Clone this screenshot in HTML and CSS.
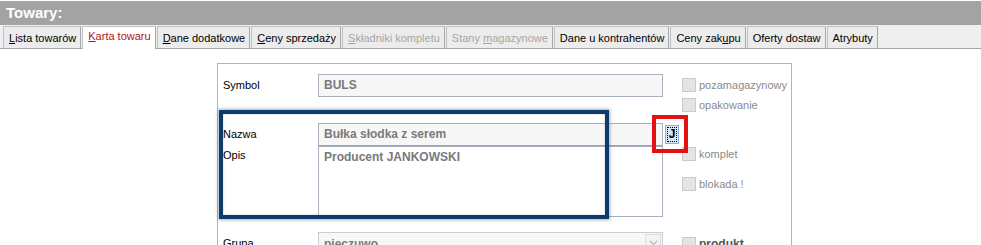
FILE: index.html
```html
<!DOCTYPE html>
<html lang="pl">
<head>
<meta charset="utf-8">
<title>Towary</title>
<link rel="stylesheet" href="styles.css">
</head>
<body>
<div class="title">Towary:</div>
<div class="tabbar">
  <div class="tab"><u>L</u>ista towarów</div>
  <div class="tab active"><u>K</u>arta towaru</div>
  <div class="tab"><u>D</u>ane dodatkowe</div>
  <div class="tab"><u>C</u>eny sprzedaży</div>
  <div class="tab disabled"><u>S</u>kładniki kompletu</div>
  <div class="tab disabled">Stany <u>m</u>agazynowe</div>
  <div class="tab">Dane u kontrahentów</div>
  <div class="tab">Ceny zak<u>u</u>pu</div>
  <div class="tab">Oferty dostaw</div>
  <div class="tab">Atrybuty</div>
</div>
<div class="content">
  <div class="panel">
    <div class="fields">
      <div class="row r-symbol">
        <span class="label">Symbol</span>
        <div class="input">BULS</div>
      </div>
      <div class="row r-nazwa">
        <span class="label">Nazwa</span>
        <div class="input">Bułka słodka z serem</div>
        <div class="jbtn"><span class="jfocus">J</span></div>
      </div>
      <div class="row r-opis">
        <span class="label">Opis</span>
        <div class="textarea">Producent JANKOWSKI</div>
      </div>
      <div class="row r-grupa">
        <span class="label">Grupa</span>
        <div class="select"><span class="sel-text">pieczuwo</span><span class="arrow">
          <svg width="9" height="6" viewBox="0 0 9 6"><path d="M1 1 L4.5 4.5 L8 1" fill="none" stroke="#b8b8b8" stroke-width="1.3"/></svg>
        </span></div>
      </div>
    </div>
    <div class="checks">
      <div class="check c1"><span class="box"></span>pozamagazynowy</div>
      <div class="check c2"><span class="box"></span>opakowanie</div>
      <div class="check c3"><span class="box"></span>komplet</div>
      <div class="check c4"><span class="box"></span>blokada !</div>
      <div class="check c5 strong"><span class="box"></span>produkt</div>
    </div>
    <div class="mark-blue"></div>
    <div class="mark-red"></div>
  </div>
</div>
</body>
</html>
```

FILE: styles.css
```css
* { box-sizing: border-box; }
html, body { margin: 0; padding: 0; }
body {
  background: #ffffff;
  font-family: "Liberation Sans", Arial, sans-serif;
  font-size: 11px;
  color: #000;
  width: 981px;
  height: 245px;
  overflow: hidden;
  padding-top: 1px;
}
.title {
  height: 24px;
  background: #a3a3a3;
  color: #ffffff;
  font-weight: bold;
  font-size: 15px;
  line-height: 24px;
  padding-left: 6px;
}
.tabbar {
  height: 24px;
  background: #efefef;
  border-bottom: 1px solid #a4a4a4;
  padding: 1px 0 0 3px;
  display: flex;
  align-items: flex-start;
}
.tab {
  height: 22px;
  line-height: 21px;
  padding: 1px 4px 0 5px;
  margin-right: 1px;
  border: 1px solid #c2c2c2;
  border-bottom: none;
  border-right-color: #a8a8a8;
  background: #ececec;
  white-space: nowrap;
  color: #000;
}
.tab u { text-decoration: underline; }
.tab.active {
  background: #ffffff;
  color: #b01515;
  padding-top: 0;
  line-height: 19px;
  height: 23px;
}
.tab.disabled { color: #a6a6a6; }

.content { padding: 14px 0 0 217px; }
.panel {
  position: relative;
  width: 575px;
  height: 200px;
  border: 1px solid #b4b4b4;
  border-bottom: none;
  display: grid;
  grid-template-columns: 464px 1fr;
}
.fields { padding: 10px 0 0 5px; }
.row { display: flex; }
.label { width: 95px; flex: none; }
.input, .textarea, .select {
  width: 345px;
  border: 1px solid #a9b1bf;
  font-size: 12px;
  font-weight: bold;
  color: #7a7a7a;
  padding-left: 5px;
}
.input { height: 23px; line-height: 20px; background: #f7f7f7; }
.r-symbol .label { line-height: 23px; }
.r-nazwa { margin-top: 26px; }
.r-nazwa .label { line-height: 23px; }
.r-nazwa .input { border-bottom-color: #9aa3b3; }
.r-opis .label { line-height: 18px; }
.textarea { height: 71px; background: #ffffff; line-height: 20px; }
.r-grupa { margin-top: 15px; }
.r-grupa .label { padding-top: 5px; }
.select {
  height: 22px;
  background: #f7f7f7;
  display: flex;
  justify-content: space-between;
  padding-right: 1px;
  border-color: #c8ccd4;
}
.sel-text { line-height: 22px; }
.arrow {
  width: 16px;
  height: 18px;
  margin-top: 1px;
  background: #f3f3f3;
  border: 1px solid #dedede;
  display: flex;
  align-items: center;
  justify-content: center;
}
.jbtn {
  width: 14px;
  height: 19px;
  margin: 2px 0 0 2px;
  background: #d6e6f5;
  border: 1px solid #8fb2d6;
  display: flex;
  align-items: center;
  justify-content: center;
}
.jfocus {
  width: 10px;
  height: 15px;
  border: 1px dotted #000;
  font-weight: bold;
  font-size: 12px;
  line-height: 13px;
  text-align: center;
}
.checks { padding-top: 14px; }
.check {
  display: flex;
  align-items: center;
  height: 13px;
  color: #8a8a8a;
  white-space: nowrap;
}
.box {
  width: 14px;
  height: 14px;
  border: 1px solid #cacaca;
  background: #e4e4e4;
  margin-right: 3px;
  flex: none;
}
.c2 { margin-top: 7px; }
.c3 { margin-top: 36px; }
.c4 { margin-top: 17px; }
.c5 { margin-top: 47px; }
.check.strong { font-weight: bold; color: #555; font-size: 12px; }

.mark-blue {
  position: absolute;
  left: 1px;
  top: 46px;
  width: 390px;
  height: 109px;
  border: 4px solid #0d3b6b;
  box-shadow: 0 0 3px 1px rgba(60, 80, 110, 0.45), inset 0 0 2px rgba(60, 80, 110, 0.4);
}
.mark-red {
  position: absolute;
  left: 434px;
  top: 51px;
  width: 36px;
  height: 38px;
  border: 4px solid #e01212;
}
```
